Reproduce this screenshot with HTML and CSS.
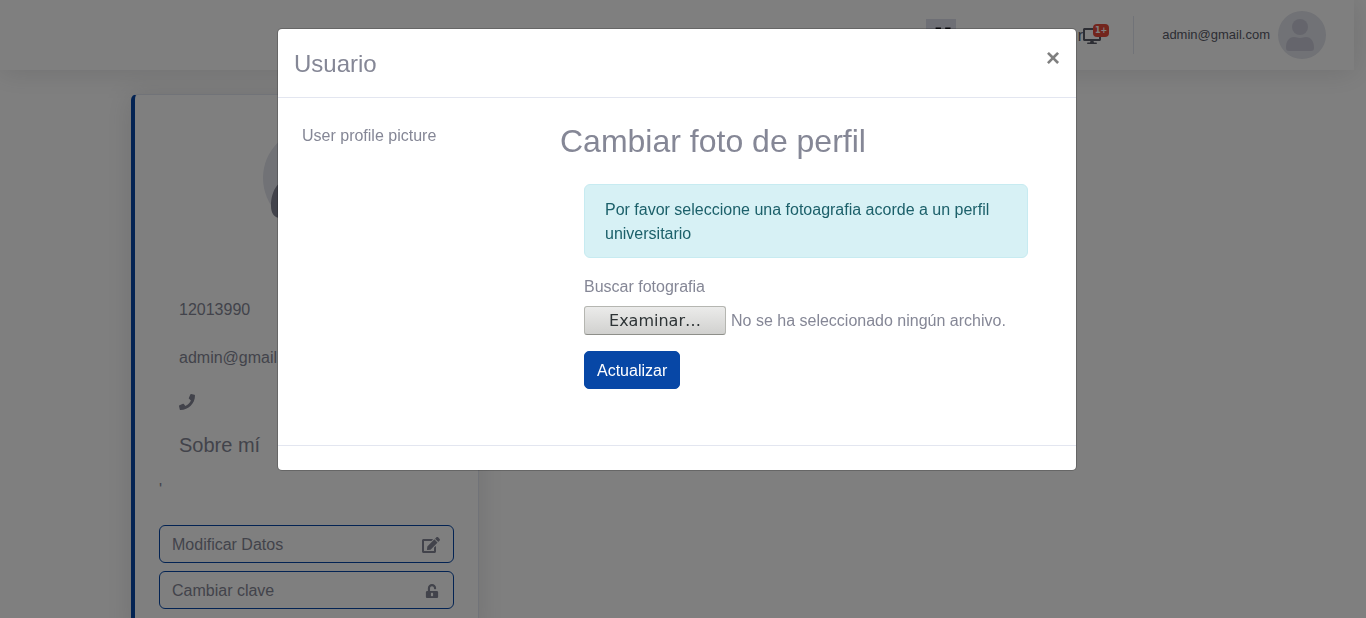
FILE: index.html
```html
<!DOCTYPE html>
<html lang="es">
<head>
<meta charset="utf-8">
<meta name="viewport" content="width=device-width, initial-scale=1">
<title>Usuario</title>
<link rel="stylesheet" href="styles.css">
</head>
<body>
<header class="topbar">
  <span class="flag"><svg viewBox="0 0 30 30" aria-hidden="true"><path fill="#111118" d="M9 8h5v8H9zM18 8h5v8h-5z"/></svg></span>
  <a class="monitor" href="#" aria-label="Monitor">r<svg class="desktop" viewBox="0 0 576 512" aria-hidden="true"><path d="M528 0H48C21.5 0 0 21.5 0 48v320c0 26.5 21.5 48 48 48h192l-16 48h-72c-13.3 0-24 10.7-24 24s10.7 24 24 24h272c13.3 0 24-10.7 24-24s-10.7-24-24-24h-72l-16-48h192c26.5 0 48-21.5 48-48V48c0-26.5-21.5-48-48-48zm-16 352H64V64h448v288z"/></svg><span class="badge">1+</span></a>
  <span class="divider"></span>
  <a class="account" href="#">admin@gmail.com
    <svg class="avatar" viewBox="0 0 48 48" aria-hidden="true"><circle cx="24" cy="24" r="24" fill="#e2e4ec"/><circle cx="22" cy="16" r="8" fill="#cacad8"/><path fill="#cacad8" d="M8 37c0-7 3-11 8-11 3 0 3 1 6 1s3-1 6-1c5 0 8 4 8 11 0 2-1 3-3 3H11c-2 0-3-1-3-3z"/></svg>
  </a>
</header>

<main class="page">
  <section class="card">
    <svg class="portrait" viewBox="0 0 100 100" aria-hidden="true"><circle cx="50" cy="50" r="50" fill="#e2e4ec"/><circle cx="50" cy="34" r="20" fill="#858796"/><path fill="#858796" d="M8 78c0-16 8-28 22-28 8 0 10 5 20 5s12-5 20-5c14 0 22 12 22 28 0 8-4 12-9 12H17c-5 0-9-4-9-12z"/></svg>
    <div class="facts">
      <p class="fact">12013990</p>
      <p class="fact">admin@gmail.com</p>
      <svg class="phone" viewBox="0 0 512 512" aria-hidden="true"><path d="M493.4 24.6l-104-24c-11.3-2.6-22.9 3.3-27.5 13.9l-48 112c-4.2 9.8-1.4 21.3 6.9 28l60.6 49.6c-36 76.7-98.9 140.5-177.2 177.2l-49.6-60.6c-6.8-8.3-18.2-11.1-28-6.9l-112 48C3.9 366.5-2 378.1.6 389.4l24 104C27.1 504.2 36.7 512 48 512c256.1 0 464-207.5 464-464 0-11.2-7.7-20.9-18.6-23.4z"/></svg>
      <h5 class="about">Sobre mí</h5>
    </div>
    <p class="bio">'</p>
    <div class="actions">
      <button class="outline" type="button">Modificar Datos
        <svg class="edit" viewBox="0 0 576 512" aria-hidden="true"><path d="M402.6 83.2l90.2 90.2c3.8 3.8 3.8 10 0 13.8L274.4 405.6l-92.8 10.3c-12.4 1.4-22.9-9.1-21.5-21.5l10.3-92.8L388.8 83.2c3.8-3.8 10-3.8 13.8 0zm162-22.9l-48.8-48.8c-15.2-15.2-39.9-15.2-55.2 0l-35.4 35.4c-3.8 3.8-3.8 10 0 13.8l90.2 90.2c3.8 3.8 10 3.8 13.8 0l35.4-35.4c15.2-15.3 15.2-40 0-55.2zM384 346.2V448H64V128h229.8c3.2 0 6.2-1.3 8.5-3.5l40-40c7.6-7.6 2.2-20.5-8.5-20.5H48C21.5 64 0 85.5 0 112v352c0 26.5 21.5 48 48 48h352c26.5 0 48-21.5 48-48V306.2c0-10.7-12.9-16-20.5-8.5l-40 40c-2.2 2.3-3.5 5.3-3.5 8.5z"/></svg>
      </button>
      <button class="outline" type="button">Cambiar clave
        <svg class="lock" viewBox="0 0 448 512" aria-hidden="true"><path d="M400 256H152V152.900c0-39.600 31.700-72.500 71.300-72.900 40-.4 72.700 32.100 72.700 72v16c0 13.300 10.700 24 24 24h32c13.300 0 24-10.700 24-24v-16C376 68 307.500-.3 223.500 0 139.500.3 72 69.500 72 153.500V256H48c-26.500 0-48 21.500-48 48v160c0 26.500 21.500 48 48 48h352c26.500 0 48-21.500 48-48V304c0-26.500-21.500-48-48-48zM264 408c0 22.100-17.900 40-40 40s-40-17.900-40-40v-48c0-22.100 17.900-40 40-40s40 17.900 40 40v48z"/></svg>
      </button>
    </div>
  </section>
</main>

<div class="backdrop">
  <div class="modal" role="dialog" aria-modal="true" aria-labelledby="modal-title">
    <div class="modal-header">
      <h2 class="modal-title" id="modal-title">Usuario</h2>
      <button class="close" type="button" aria-label="Cerrar">×</button>
    </div>
    <div class="modal-body">
      <div class="picture">User profile picture</div>
      <form class="upload">
        <h1 class="upload-title">Cambiar foto de perfil</h1>
        <div class="upload-fields">
          <div class="alert" role="alert">Por favor seleccione una fotoagrafia acorde a un perfil universitario</div>
          <label class="field-label" for="photo">Buscar fotografia</label>
          <div class="file-row">
            <input class="file-input" type="file" id="photo">
            <label class="browse" for="photo">Examinar…</label>
            <span>No se ha seleccionado ningún archivo.</span>
          </div>
          <button class="primary" type="submit">Actualizar</button>
        </div>
      </form>
    </div>
    <div class="modal-footer"></div>
  </div>
</div>
</body>
</html>
```

FILE: styles.css
```css
* {
  box-sizing: border-box;
}

body {
  margin: 0;
  padding-right: 12px;
  height: 100vh;
  overflow: hidden;
  background: #fff;
  color: #858796;
  font: 16px/24px "Liberation Sans", Arial, sans-serif;
}

h1, h2, h5, p {
  margin: 0;
  font-weight: 400;
}

button {
  font: inherit;
  cursor: pointer;
}

svg {
  flex: none;
  fill: #858796;
}

a {
  color: inherit;
  text-decoration: none;
}

/* Top bar */
.topbar {
  display: flex;
  align-items: center;
  justify-content: flex-end;
  height: 70px;
  padding-right: 28px;
  background: #fff;
  box-shadow: 0 2px 28px rgba(58, 59, 69, .15);
}

.flag {
  display: flex;
  width: 30px;
  height: 32px;
  margin-right: 122px;
  background: #dddfeb;
}

.monitor {
  position: relative;
  display: flex;
  align-items: center;
  padding-top: 2px;
  color: #5a5c69;
}

.desktop {
  width: 18px;
  height: 16px;
  fill: #5a5c69;
}

.badge {
  position: absolute;
  top: 2px;
  right: -8px;
  padding: 0 2px;
  border-radius: 4px;
  background: #e74a3b;
  color: #fff;
  font: 700 8px/13px "DejaVu Sans", sans-serif;
}

.divider {
  width: 1px;
  height: 38px;
  margin: 0 28px 0 32px;
  background: #e3e6f0;
}

.account {
  display: flex;
  align-items: center;
  gap: 8px;
  color: #5a5c69;
  font-size: 13px;
}

.avatar {
  width: 48px;
  height: 48px;
}

/* Profile card */
.page {
  padding: 24px 24px 24px 131px;
}

.card {
  display: flex;
  flex-direction: column;
  width: 348px;
  padding: 33px 24px 24px;
  border: 1px solid #e3e6f0;
  border-left: 4px solid #0747a6;
  border-radius: 6px;
  background: #fff;
  box-shadow: 0 2px 28px rgba(58, 59, 69, .15);
}

.portrait {
  width: 100px;
  height: 100px;
  margin-left: 104px;
}

.facts {
  display: flex;
  flex-direction: column;
  padding: 70px 20px 0;
}

.fact {
  margin-bottom: 24px;
}

.phone {
  width: 16px;
  height: 16px;
  margin-bottom: 23px;
}

.about {
  font-size: 20px;
}

.bio {
  margin-top: 21px;
}

.actions {
  display: flex;
  flex-direction: column;
  gap: 8px;
  margin-top: 23px;
}

.outline {
  display: flex;
  align-items: center;
  justify-content: space-between;
  height: 38px;
  padding: 2px 13px 0 12px;
  border: 1px solid #0747a6;
  border-radius: 6px;
  background: none;
  color: #858796;
}

.edit {
  width: 18px;
  height: 16px;
}

.lock {
  width: 16px;
  height: 14px;
}

/* Modal */
.backdrop {
  position: fixed;
  inset: 0;
  padding: 28px 12px 28px 0;
  background: rgba(0, 0, 0, .5);
}

.modal {
  max-width: 800px;
  margin: 0 auto;
  border: 1px solid rgba(0, 0, 0, .2);
  border-radius: 5px;
  background: #fff;
  background-clip: padding-box;
}

.modal-header {
  display: flex;
  align-items: flex-start;
  justify-content: space-between;
  padding: 16px;
  border-bottom: 1px solid #e3e6f0;
}

.modal-title {
  padding-top: 1px;
  font-size: 24px;
  line-height: 35px;
}

.close {
  padding: 0;
  border: 0;
  background: none;
  color: #7f7f7f;
  font-size: 24px;
  font-weight: 700;
  line-height: 26px;
}

.modal-body {
  display: grid;
  grid-template-columns: 1fr 2fr;
  gap: 12px;
  padding: 24px 24px 56px;
}

.picture {
  padding-top: 2px;
}

.upload-title {
  margin-bottom: 24px;
  font-size: 32px;
  line-height: 38px;
}

.upload-fields {
  padding: 0 24px;
}

.alert {
  margin-bottom: 16px;
  padding: 13px 20px 11px;
  border: 1px solid #c7ebf1;
  border-radius: 6px;
  background: #d7f1f5;
  color: #1c606a;
}

.field-label {
  display: block;
  padding-top: 1px;
  margin-bottom: 7px;
}

.file-row {
  display: flex;
  align-items: center;
  gap: 5px;
  margin-bottom: 16px;
}

.file-input {
  position: absolute;
  width: 1px;
  height: 1px;
  opacity: 0;
}

.browse {
  width: 142px;
  border: 1px solid #b5b6b1;
  border-bottom-color: #8e8f8a;
  border-radius: 3px;
  background: linear-gradient(#ebebea, #d1d1cf);
  color: #2e3436;
  font: 16px/27px "DejaVu Sans", sans-serif;
  text-align: center;
  cursor: pointer;
}

.primary {
  height: 38px;
  padding: 2px 12px 0;
  border: 1px solid #0747a6;
  border-radius: 5px;
  background: #0747a6;
  color: #fff;
}

.modal-footer {
  height: 25px;
  border-top: 1px solid #e3e6f0;
}
```
